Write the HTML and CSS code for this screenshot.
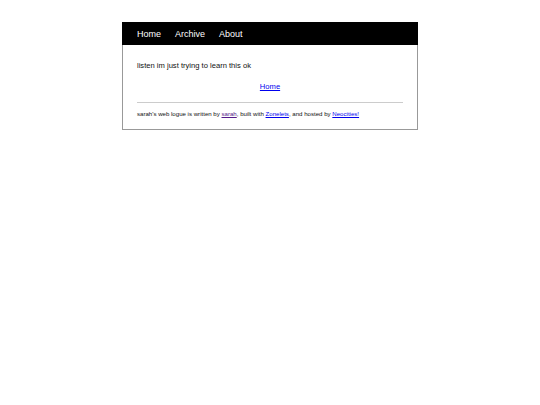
FILE: index.html
```html
<!DOCTYPE html>
<html>
<head>
<meta charset="utf-8">
<title>sarah's web logue</title>
<link rel="stylesheet" href="styles.css">
</head>
<body>
<div class="wrap">
  <nav class="nav">
    <a href="#">Home</a>
    <a href="#">Archive</a>
    <a href="#">About</a>
  </nav>
  <main class="main">
    <p class="post">listen im just trying to learn this ok</p>
    <div class="back"><a class="link" href="#">Home</a></div>
    <hr class="rule">
    <footer class="foot">sarah's web logue is written by <a class="link visited" href="#">sarah</a>, built with <a class="link" href="#">Zonelets</a>, and hosted by <a class="link" href="#">Neocities!</a></footer>
  </main>
</div>
</body>
</html>
```
FILE: styles.css
```css
html, body {
  margin: 0;
  padding: 0;
  background: #fff;
}
body {
  font-family: "Liberation Sans", Arial, sans-serif;
  color: #111;
}
.wrap {
  box-sizing: border-box;
  width: 296px;
  margin: 22px auto 0;
  border: 1px solid #999;
  border-top: none;
}
.nav {
  background: #000;
  height: 23px;
  margin: 0 -1px;
  padding: 0 15px;
  display: flex;
  gap: 14px;
  align-items: center;
}
.nav a {
  color: #fff;
  text-decoration: none;
  font-size: 9px;
  line-height: 23px;
  padding-top: 1px;
}
.main {
  padding: 16px 14px 12px;
}
.post {
  margin: 0;
  font-size: 7.6px;
  line-height: 9px;
}
.back {
  margin-top: 12px;
  text-align: center;
  font-size: 7.6px;
  line-height: 9px;
}
.link {
  color: #0000ee;
}
.visited {
  color: #551a8b;
}
.rule {
  margin: 11px 0 0;
  border: none;
  border-top: 1px solid #ccc;
  height: 0;
}
.foot {
  margin-top: 7px;
  font-size: 6.1px;
  line-height: 7px;
}
```
